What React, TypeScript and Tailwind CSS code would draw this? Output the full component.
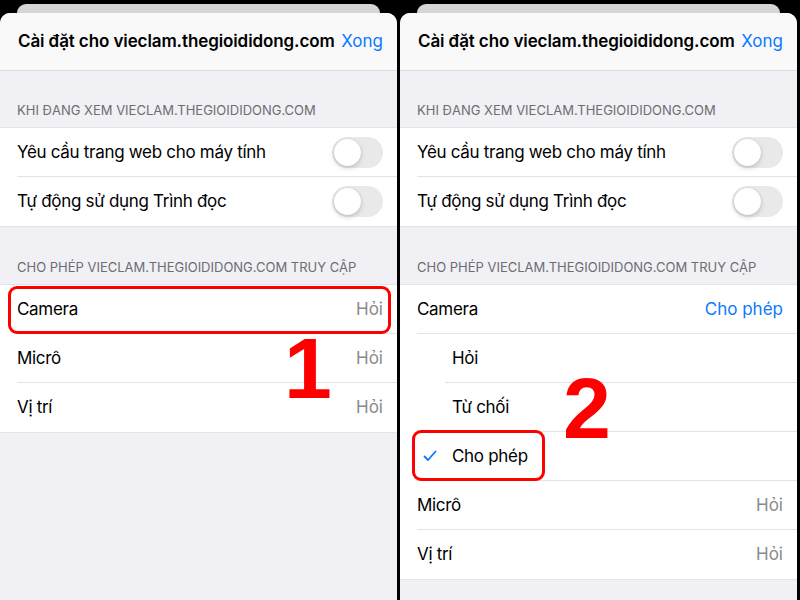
import React from "react";

const font = { fontFamily: "Inter, 'Noto Sans', sans-serif" };

function Toggle() {
  return (
    <div className="relative h-[31px] w-[51px] rounded-full bg-[#e9e9ea]">
      <div className="absolute left-[2px] top-[2px] h-[27px] w-[27px] rounded-full bg-white shadow-[0_2px_5px_rgba(0,0,0,0.18),0_0_0_0.5px_rgba(0,0,0,0.06)]" />
    </div>
  );
}

function Row({
  label,
  right,
  indent = 17,
  sep = true,
  sepIndent = 17,
  children,
}: {
  label: string;
  right?: React.ReactNode;
  indent?: number;
  sep?: boolean;
  sepIndent?: number;
  children?: React.ReactNode;
}) {
  return (
    <div className="relative bg-white">
      <div
        className="flex h-[49px] items-center justify-between pr-[14px] text-[17px] text-black"
        style={{ paddingLeft: indent }}
      >
        <span className="tracking-[-0.3px]">{label}</span>
        {right}
      </div>
      {children}
      {sep && (
        <div
          className="absolute bottom-0 right-0 h-px bg-[#e3e3e6]"
          style={{ left: sepIndent }}
        />
      )}
    </div>
  );
}

function SectionHeader({ text, h }: { text: string; h: string }) {
  return (
    <div className={`flex items-end border-b border-[#e3e3e6] px-[17px] pb-[7px] ${h}`}>
      <span className="text-[13px] uppercase text-[#6d6d72]">{text}</span>
    </div>
  );
}

const ask = <span className="text-[17px] text-[#8a8a8e]">Hỏi</span>;

function Sheet({ children }: { children: React.ReactNode }) {
  return (
    <div className="flex h-[600px] w-[397px] flex-col bg-black">
      <div className="h-[13px] px-[17px] pt-[4px]">
        <div className="h-[9px] rounded-t-[10px] bg-[#d6d6d9]" />
      </div>
      <div className="relative flex-1 overflow-hidden rounded-t-[10px] bg-[#f0f0f5]">
        <div className="flex h-[58px] items-center justify-between border-b border-[#dcdce0] bg-[#f9f9f9] pl-[18px] pr-[14px]">
          <span className="text-[17px] font-semibold tracking-[-0.1px] text-black">
            Cài đặt cho vieclam.thegioididong.com
          </span>
          <span className="text-[17px] text-[#0a7aff]">Xong</span>
        </div>
        <SectionHeader text="Khi đang xem vieclam.thegioididong.com" h="h-[57px]" />
        <Row label="Yêu cầu trang web cho máy tính" right={<Toggle />} />
        <Row label="Tự động sử dụng Trình đọc" right={<Toggle />} sep={false} />
        <div className="border-b border-[#e3e3e6]" />
        <SectionHeader text="Cho phép vieclam.thegioididong.com truy cập" h="h-[58px]" />
        {children}
      </div>
    </div>
  );
}

export default function App() {
  return (
    <div className="flex h-[600px] w-[800px] gap-[3px] overflow-hidden bg-black" style={font}>
      <Sheet>
        <div className="relative">
          <Row label="Camera" right={ask} />
          <Row label="Micrô" right={ask} />
          <Row label="Vị trí" right={ask} sep={false} />
          <div className="border-b border-[#e3e3e6]" />
          <div className="absolute left-[8px] top-[1px] h-[48px] w-[383px] rounded-[9px] border-[3px] border-[#ff0000]" />
          <div
            className="absolute left-[284px] top-[40px] text-[86px] font-bold leading-none text-[#ff0000]"
            style={{ fontFamily: "'Liberation Sans', sans-serif" }}
          >
            1
          </div>
        </div>
      </Sheet>
      <Sheet>
        <div className="relative">
          <Row label="Camera" right={<span className="text-[17px] text-[#0a7aff]">Cho phép</span>} />
          <Row label="Hỏi" indent={52} sepIndent={45} />
          <Row label="Từ chối" indent={52} sepIndent={45} />
          <Row label="Cho phép" indent={52} sepIndent={17}>
            <svg
              className="absolute left-[23px] top-[18px]"
              width="14"
              height="12"
              viewBox="0 0 14 12"
              fill="none"
            >
              <path d="M1.5 6.5 L5 10 L12.5 1.5" stroke="#0a7aff" strokeWidth="1.8" strokeLinecap="round" strokeLinejoin="round" />
            </svg>
          </Row>
          <Row label="Micrô" right={ask} />
          <Row label="Vị trí" right={ask} sep={false} />
          <div className="border-b border-[#e3e3e6]" />
          <div className="absolute left-[12px] top-[145px] h-[51px] w-[133px] rounded-[9px] border-[3px] border-[#ff0000]" />
          <div
            className="absolute left-[163px] top-[80px] text-[86px] font-black leading-none text-[#ff0000]"
            style={{ fontFamily: "'Liberation Sans', sans-serif", fontWeight: 900 }}
          >
            2
          </div>
        </div>
      </Sheet>
      <div className="w-0" />
    </div>
  );
}
